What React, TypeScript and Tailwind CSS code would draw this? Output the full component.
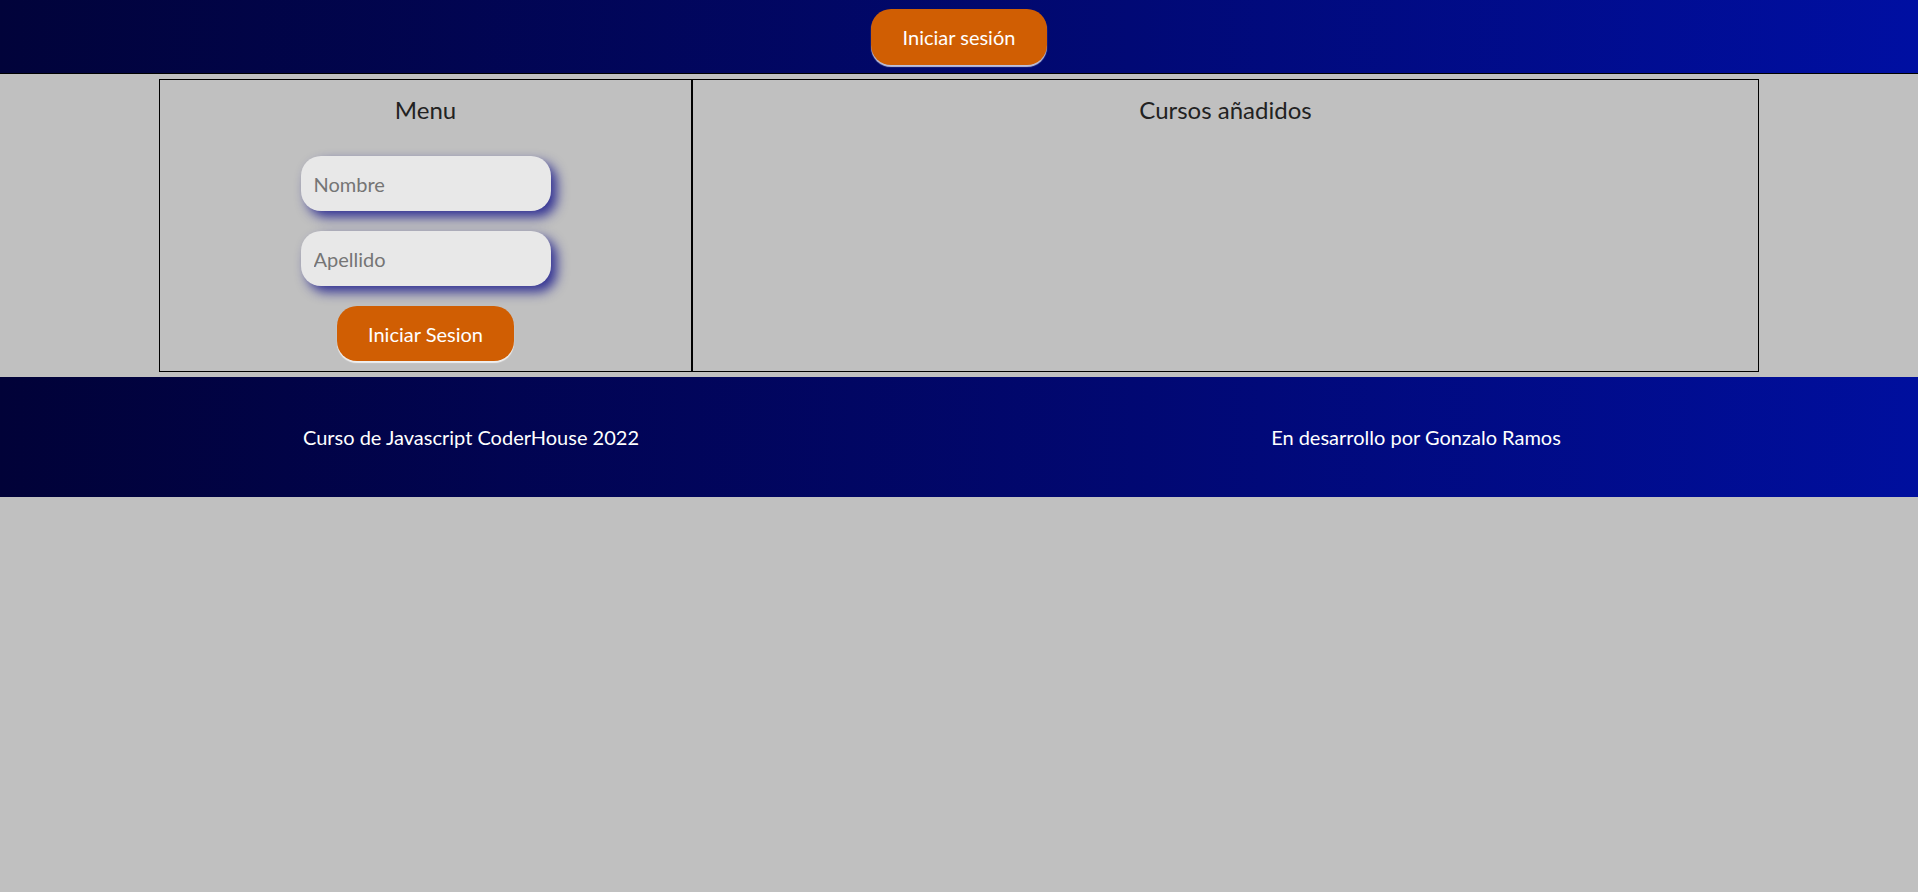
import React from "react";

export default function App() {
  const font = { fontFamily: "Lato, 'Open Sans', sans-serif" };
  return (
    <div className="min-h-[892px] bg-[#c0c0c0] font-['Lato','Open_Sans',sans-serif]" style={font}>
      <header className="h-[74px] border-b border-black bg-linear-to-r from-[#01033a] to-[#000fa2] flex items-center justify-center">
        <button className="w-[176px] h-[56px] rounded-[20px] bg-[#d05e03] text-white text-[20px] shadow-[0_2px_1px_rgba(255,255,255,0.75)]">
          Iniciar sesión
        </button>
      </header>

      <main className="mt-[5px] mx-auto w-[1600px] h-[293px] flex">
        <section className="w-[533px] border border-black flex flex-col items-center pt-[14px]">
          <h2 className="text-[24px] leading-[32px] text-[#222]">Menu</h2>
          <input
            placeholder="Nombre"
            className="mt-[30px] w-[250px] h-[55px] rounded-[20px] bg-[#e8e8e8] pl-[13px] text-[20px] placeholder:text-[#757575] outline-none shadow-[6px_6px_12px_rgba(25,25,140,0.85)]"
          />
          <input
            placeholder="Apellido"
            className="mt-[20px] w-[250px] h-[55px] rounded-[20px] bg-[#e8e8e8] pl-[13px] text-[20px] placeholder:text-[#757575] outline-none shadow-[6px_6px_12px_rgba(25,25,140,0.85)]"
          />
          <button className="mt-[20px] w-[177px] h-[55px] rounded-[20px] bg-[#d05e03] text-white text-[20px] shadow-[0_2px_1px_rgba(255,255,255,0.75)]">
            Iniciar Sesion
          </button>
        </section>
        <section className="flex-1 border border-black flex flex-col items-center pt-[14px]">
          <h2 className="text-[24px] leading-[32px] text-[#222]">Cursos añadidos</h2>
        </section>
      </main>

      <footer className="mt-[5px] h-[120px] bg-linear-to-r from-[#010238] to-[#000f9e] flex items-center text-white text-[20px]">
        <div className="w-[942px] text-center">Curso de Javascript CoderHouse 2022</div>
        <div className="w-[948px] text-center">En desarrollo por Gonzalo Ramos</div>
      </footer>
    </div>
  );
}
